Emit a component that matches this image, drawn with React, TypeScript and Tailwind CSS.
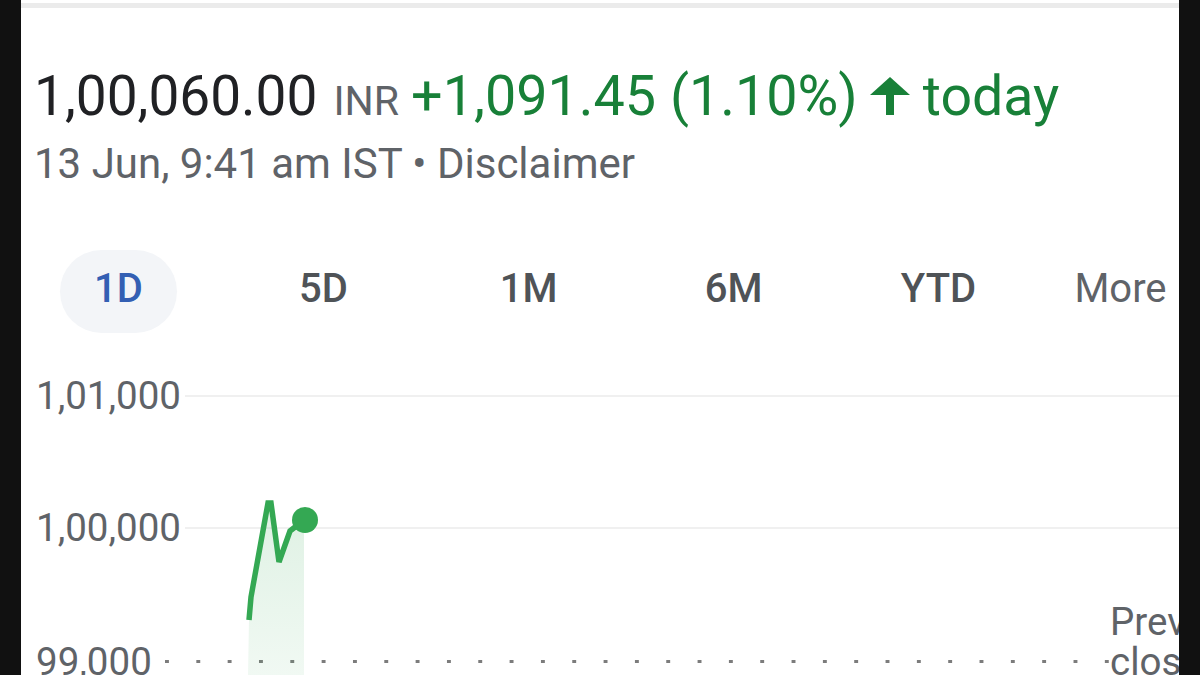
import React from 'react';

// Range tabs shown above the chart
const ranges = ['1D', '5D', '1M', '6M', 'YTD'];

// Intraday points, in panel pixels
const linePoints = '228,620 230,597 247,503 250,503 258,562 269,531 283,520';

const UpArrow = () => (
  <svg width="40" height="38" viewBox="0 0 40 38" className="shrink-0 self-center mt-[-4px]">
    <polygon points="0,18 20,0 40,18" fill="#188038" />
    <rect x="16" y="17" width="8" height="21" fill="#188038" />
  </svg>
);

const ChartOverlay = () => (
  <svg
    className="absolute left-0 top-0 pointer-events-none"
    width="1158"
    height="675"
    viewBox="0 0 1158 675"
  >
    <defs>
      <linearGradient id="fillGreen" x1="0" y1="0" x2="0" y2="1">
        <stop offset="0%" stopColor="#34a853" stopOpacity="0.16" />
        <stop offset="100%" stopColor="#34a853" stopOpacity="0.07" />
      </linearGradient>
    </defs>
    <polygon points={`227,675 ${linePoints} 283,520 283,675`} fill="url(#fillGreen)" />
    <polyline
      points={linePoints}
      fill="none"
      stroke="#34a853"
      strokeWidth="5.5"
      strokeLinejoin="miter"
      strokeLinecap="butt"
    />
    <circle cx="284" cy="520" r="13" fill="#34a853" />
  </svg>
);

export default function App() {
  return (
    <div className="w-[1200px] h-[675px] bg-[#111111] flex overflow-hidden">
      <div className="relative ml-[21px] w-[1158px] h-full bg-white overflow-hidden font-['Roboto','Liberation_Sans',sans-serif]">
        <div className="mt-[3px] h-[5px] bg-[#ebebeb]" />

        <div className="pl-[13px]">
          {/* price line */}
          <div className="mt-[56px] h-[64px] flex items-baseline whitespace-nowrap">
            <span className="text-[55px] leading-[64px] text-[#202124]">1,00,060.00</span>
            <span className="ml-[16px] text-[41px] leading-[64px] text-[#5f6368]">INR</span>
            <span className="ml-[12px] text-[55.7px] leading-[64px] text-[#188038]">+1,091.45 (1.10%)</span>
            <span className="ml-[12px] flex">
              <UpArrow />
            </span>
            <span className="ml-[13px] text-[55.5px] leading-[64px] text-[#188038]">today</span>
          </div>

          <div className="mt-[12px] text-[42px] leading-[48px] text-[#5f6368] whitespace-nowrap">
            13 Jun, 9:41 am IST • Disclaimer
          </div>

          {/* range tabs */}
          <div className="mt-[62px] ml-[26px] flex gap-[88px]">
            {ranges.map((r, i) => (
              <div
                key={r}
                className={
                  i === 0
                    ? 'w-[117px] h-[83px] shrink-0 rounded-full bg-[#f3f5f8] flex items-center justify-center pb-[5px] text-[40px] font-medium text-[#335fb3]'
                    : 'w-[117px] h-[83px] shrink-0 flex items-center justify-center pb-[5px] text-[40px] font-medium text-[#4f5357]'
                }
              >
                {r}
              </div>
            ))}
            <div className="w-[117px] h-[83px] shrink-0 flex items-center justify-center pb-[5px] text-[40px] text-[#5f6368]">
              <div className="flex items-center shrink-0 whitespace-nowrap">
                <span>More</span>
                <svg width="38" height="38" viewBox="0 0 24 24" className="ml-[8px] shrink-0">
                  <path d="M7 10l5 5 5-5z" fill="#5f6368" />
                </svg>
              </div>
            </div>
          </div>

          {/* chart grid */}
          <div className="mt-[41px] ml-[2px] h-[44px] flex items-center">
            <span className="text-[38.5px] leading-[44px] text-[#5f6368]">1,01,000</span>
            <div className="flex-1 ml-[4px] h-[2px] bg-[#f0f0f0]" />
          </div>
          <div className="mt-[88px] ml-[2px] h-[44px] flex items-center">
            <span className="text-[38.5px] leading-[44px] text-[#5f6368]">1,00,000</span>
            <div className="flex-1 ml-[4px] h-[2px] bg-[#f0f0f0]" />
          </div>
          <div className="mt-[52px] ml-[2px] flex items-end">
            <span className="text-[38.5px] leading-[40px] text-[#5f6368] whitespace-nowrap">99,000</span>
            <div className="flex-1 ml-[13px] mb-[19px] h-[3px] bg-[linear-gradient(to_right,#7c7c7c_4px,transparent_4px)] bg-[length:31.33px_3px] bg-repeat-x" />
            <div className="w-[69px] shrink-0 text-[38.5px] leading-[40px] text-[#5f6368] whitespace-nowrap">
              <div>Prev</div>
              <div>close</div>
            </div>
          </div>
        </div>

        <ChartOverlay />
      </div>
    </div>
  );
}
